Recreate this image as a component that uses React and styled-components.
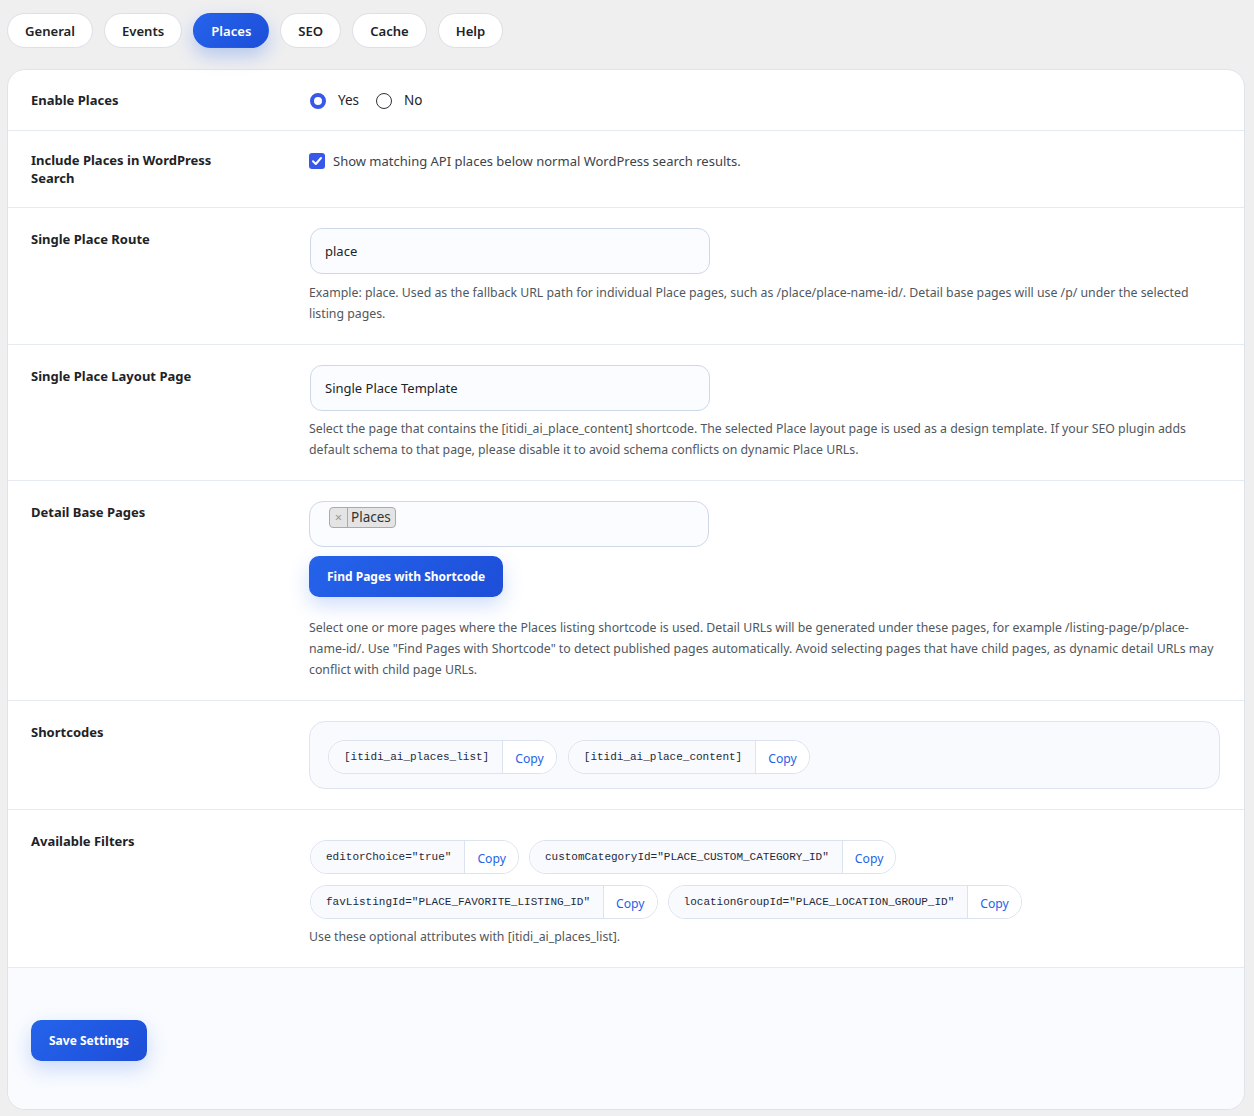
import React from "react";
import styled, { createGlobalStyle } from "styled-components";

const Global = createGlobalStyle`
  html, body { margin: 0; padding: 0; }
  body {
    background: #efeff0;
    font-family: "Noto Sans", "Open Sans", Arial, sans-serif;
    color: #1d2327;
    font-size: 13px;
  }
  * { box-sizing: border-box; }
`;

const Page = styled.div`
  padding: 13px 9px 6px 7px;
`;

const Tabs = styled.nav`
  display: flex;
  gap: 11px;
  margin-bottom: 21px;
`;

const Tab = styled.button`
  height: 35px;
  padding: 0 17px;
  border-radius: 999px;
  font-family: inherit;
  font-size: 13.1px;
  font-weight: 600;
  cursor: pointer;
  border: 1px solid ${(p) => (p.$active ? "transparent" : "#dcdfe6")};
  background: ${(p) => (p.$active ? "linear-gradient(135deg, #2563eb, #1d4ed8)" : "#fff")};
  color: ${(p) => (p.$active ? "#fff" : "#1d2327")};
  box-shadow: ${(p) => (p.$active ? "0 8px 18px rgba(37, 99, 235, 0.28)" : "none")};
`;

const Card = styled.div`
  background: #fff;
  border: 1px solid #dfe3ea;
  border-radius: 18px;
  overflow: hidden;
`;

const Row = styled.div`
  display: grid;
  grid-template-columns: 278px 1fr;
  padding: 20px 24px 20px 23px;
  border-bottom: 1px solid #e5e9f0;
`;

const Label = styled.div`
  font-weight: 700;
  font-size: 13px;
  line-height: 18px;
  color: #1d2327;
  padding-top: ${(p) => p.$pt || 0}px;
  padding-right: 60px;
`;

const Field = styled.div`
  display: flex;
  flex-direction: column;
  align-items: flex-start;
`;

const RadioGroup = styled.div`
  display: flex;
  align-items: center;
  gap: 16px;
  padding-top: 1px;
`;

const RadioLabel = styled.label`
  display: flex;
  align-items: center;
  gap: 12px;
  font-size: 13.5px;
  line-height: 19px;
  color: #1d2327;
`;

const Radio = styled.span`
  width: 16px;
  height: 16px;
  border-radius: 50%;
  border: ${(p) => (p.$checked ? "4.5px solid #3858e9" : "1px solid #2c3338")};
  background: #fff;
  margin-left: 1px;
`;

const CheckRow = styled.label`
  display: flex;
  align-items: center;
  gap: 8px;
  font-size: 13px;
  color: #3c434a;
  padding-top: 1px;
`;

const CheckBox = styled.span`
  width: 16px;
  height: 16px;
  border-radius: 3px;
  background: #3858e9;
  display: flex;
  align-items: center;
  justify-content: center;
`;

const TextInput = styled.div`
  width: 400px;
  height: 46px;
  border: 1px solid #cfd8e6;
  border-radius: 12px;
  background: #fbfcff;
  display: flex;
  align-items: center;
  padding: 0 14px;
  font-size: 13px;
  color: #1d2327;
  margin-left: 1px;
`;

const Help = styled.p`
  margin: ${(p) => p.$mt || 7}px 0 0;
  font-size: 12.3px;
  line-height: 21px;
  color: #50575e;
`;

const TagBox = styled.div`
  width: 400px;
  height: 46px;
  border: 1px solid #cfd8e6;
  border-radius: 14px;
  background: #fbfcff;
  padding: 5px 19px;
  display: flex;
  align-items: flex-start;
`;

const Chip = styled.span`
  display: inline-flex;
  align-items: stretch;
  height: 21px;
  border: 1px solid #aaa;
  border-radius: 4px;
  background: #e4e4e4;
  font-size: 13.5px;
  color: #333;
  line-height: 19px;
`;

const ChipX = styled.span`
  width: 18px;
  border-right: 1px solid #aaa;
  color: #999;
  font-size: 13px;
  display: flex;
  align-items: center;
  justify-content: center;
`;

const ChipText = styled.span`
  padding: 0 4px 0 3px;
`;

const PrimaryButton = styled.button`
  height: 41px;
  padding: 0 18px;
  border: none;
  border-radius: 10px;
  background: linear-gradient(135deg, #2563eb, #1d4ed8);
  color: #fff;
  font-family: inherit;
  font-size: 12px;
  font-weight: 700;
  box-shadow: 0 8px 20px rgba(37, 99, 235, 0.22);
  cursor: pointer;
  margin-top: ${(p) => p.$mt || 0}px;
`;

const ShortcodeBox = styled.div`
  width: 100%;
  border: 1px solid #dfe5ef;
  border-radius: 16px;
  background: #f8fafd;
  padding: 18px 18px 14px;
  display: flex;
  gap: 11px;
`;

const PillWrap = styled.div`
  display: flex;
  flex-wrap: wrap;
  gap: 11px 10px;
  max-width: 720px;
  margin-top: 10px;
  margin-left: 1px;
`;

const Pill = styled.div`
  display: inline-flex;
  height: 34px;
  border: 1px solid #dbe3ef;
  border-radius: 999px;
  overflow: hidden;
  background: #fff;
`;

const Code = styled.code`
  display: flex;
  align-items: center;
  padding: 0 13px 0 15px;
  background: #f8fafd;
  font-family: "Liberation Mono", "DejaVu Sans Mono", monospace;
  font-size: 11px;
  color: #1e293b;
  border-right: 1px solid #dbe3ef;
`;

const CopyBtn = styled.button`
  border: none;
  background: #fff;
  font-family: inherit;
  font-size: 12.2px;
  color: #2563eb;
  padding: 2px 12px 0 12px;
  cursor: pointer;
`;

const Footer = styled.div`
  background: #f9fbfe;
  padding: 52px 23px 48px;
`;

const shortcodes = ["[itidi_ai_places_list]", "[itidi_ai_place_content]"];
const filters = [
  'editorChoice="true"',
  'customCategoryId="PLACE_CUSTOM_CATEGORY_ID"',
  'favListingId="PLACE_FAVORITE_LISTING_ID"',
  'locationGroupId="PLACE_LOCATION_GROUP_ID"',
];

function CodePill({ text }) {
  return (
    <Pill>
      <Code>{text}</Code>
      <CopyBtn>Copy</CopyBtn>
    </Pill>
  );
}

export default function App() {
  const tabs = ["General", "Events", "Places", "SEO", "Cache", "Help"];
  return (
    <Page>
      <Global />
      <Tabs>
        {tabs.map((t) => (
          <Tab key={t} $active={t === "Places"}>
            {t}
          </Tab>
        ))}
      </Tabs>
      <Card>
        <Row>
          <Label $pt={1}>Enable Places</Label>
          <Field>
            <RadioGroup>
              <RadioLabel>
                <Radio $checked />
                Yes
              </RadioLabel>
              <RadioLabel>
                <Radio />
                No
              </RadioLabel>
            </RadioGroup>
          </Field>
        </Row>
        <Row>
          <Label>Include Places in WordPress Search</Label>
          <Field>
            <CheckRow>
              <CheckBox>
                <svg width="12" height="12" viewBox="0 0 12 12">
                  <path d="M2 6.3 L4.8 9 L10 3" fill="none" stroke="#fff" strokeWidth="2" strokeLinecap="round" strokeLinejoin="round" />
                </svg>
              </CheckBox>
              Show matching API places below normal WordPress search results.
            </CheckRow>
          </Field>
        </Row>
        <Row>
          <Label $pt={2}>Single Place Route</Label>
          <Field>
            <TextInput>place</TextInput>
            <Help $mt={8}>
              Example: place. Used as the fallback URL path for individual Place pages, such as /place/place-name-id/. Detail base pages will use /p/ under the selected listing pages.
            </Help>
          </Field>
        </Row>
        <Row>
          <Label $pt={2}>Single Place Layout Page</Label>
          <Field>
            <TextInput>Single Place Template</TextInput>
            <Help>
              Select the page that contains the [itidi_ai_place_content] shortcode. The selected Place layout page is used as a design template. If your SEO plugin adds default schema to that page, please disable it to avoid schema conflicts on dynamic Place URLs.
            </Help>
          </Field>
        </Row>
        <Row>
          <Label $pt={2}>Detail Base Pages</Label>
          <Field>
            <TagBox>
              <Chip>
                <ChipX>×</ChipX>
                <ChipText>Places</ChipText>
              </Chip>
            </TagBox>
            <PrimaryButton $mt={9}>Find Pages with Shortcode</PrimaryButton>
            <Help $mt={20}>
              Select one or more pages where the Places listing shortcode is used. Detail URLs will be generated under these pages, for example /listing-page/p/place-name-id/. Use "Find Pages with Shortcode" to detect published pages automatically. Avoid selecting pages that have child pages, as dynamic detail URLs may conflict with child page URLs.
            </Help>
          </Field>
        </Row>
        <Row>
          <Label $pt={2}>Shortcodes</Label>
          <Field>
            <ShortcodeBox>
              {shortcodes.map((s) => (
                <CodePill key={s} text={s} />
              ))}
            </ShortcodeBox>
          </Field>
        </Row>
        <Row>
          <Label $pt={2}>Available Filters</Label>
          <Field>
            <PillWrap>
              {filters.map((f) => (
                <CodePill key={f} text={f} />
              ))}
            </PillWrap>
            <Help $mt={7}>Use these optional attributes with [itidi_ai_places_list].</Help>
          </Field>
        </Row>
        <Footer>
          <PrimaryButton>Save Settings</PrimaryButton>
        </Footer>
      </Card>
    </Page>
  );
}
